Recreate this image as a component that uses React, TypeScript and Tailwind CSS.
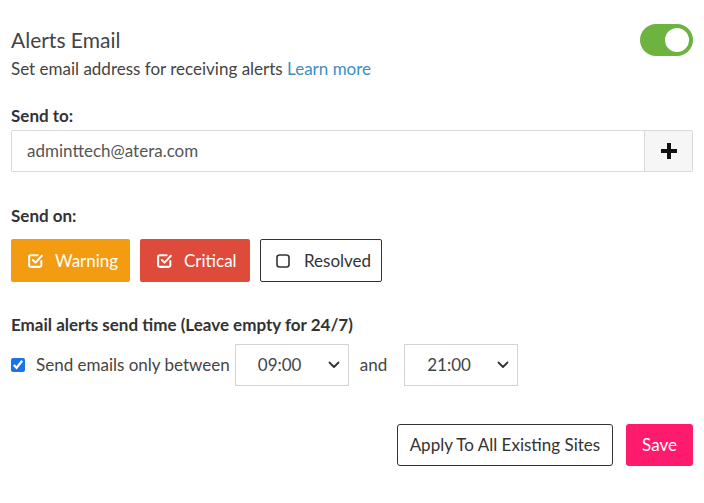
import React, { useState } from 'react';

const CheckSquare: React.FC = () => (
  <svg width="17" height="17" viewBox="0 0 16 16" fill="none" stroke="currentColor" strokeWidth="1.9" strokeLinecap="round" strokeLinejoin="round">
    <path d="M13.5 8.5V12.5a1.5 1.5 0 0 1-1.5 1.5H3.5A1.5 1.5 0 0 1 2 12.5v-8A1.5 1.5 0 0 1 3.5 3H10" />
    <path d="M5.5 7.5l2.5 2.5 6-6.5" />
  </svg>
);

const EmptySquare: React.FC = () => (
  <svg width="14" height="14" viewBox="0 0 14 14" fill="none" stroke="currentColor" strokeWidth="1.6">
    <rect x="1" y="1" width="12" height="12" rx="2.5" />
  </svg>
);

const Chevron: React.FC = () => (
  <svg width="12" height="8" viewBox="0 0 12 8" fill="none" stroke="#333" strokeWidth="1.8" strokeLinecap="round" strokeLinejoin="round">
    <path d="M1.5 1.5l4.5 4.5 4.5-4.5" />
  </svg>
);

const TimeSelect: React.FC<{ value: string }> = ({ value }) => (
  <div className="flex items-center justify-between w-[114px] h-[42px] border border-[#d4d4d4] bg-white pl-[22px] pr-[8px] text-[17px] text-[#444]">
    <span>{value}</span>
    <Chevron />
  </div>
);

const App: React.FC = () => {
  const [enabled] = useState(true);

  return (
    <div className="w-[704px] h-[503px] bg-white px-[11px] pt-[24px] text-[#333]" style={{ fontFamily: 'Lato, "Open Sans", sans-serif' }}>
      <div className="flex justify-between">
        <div>
          <h2 className="text-[21px] leading-[32px] text-[#444] font-normal">Alerts Email</h2>
          <p className="text-[17px] leading-[24px] mt-[1px] text-[#444]">
            Set email address for receiving alerts <a className="text-[#3b8fc2]">Learn more</a>
          </p>
        </div>
        <div className={`w-[53px] h-[32px] rounded-full ${enabled ? 'bg-[#6cb33f]' : 'bg-gray-300'} flex items-center justify-end pr-[2px]`}>
          <div className="w-[28px] h-[28px] rounded-full bg-white border-2 border-[#6cb33f]" />
        </div>
      </div>

      <div className="mt-[23px] text-[17px] font-bold leading-[24px] text-[#333]">Send to:</div>
      <div className="mt-[2px] flex h-[42px] border border-[#dadada] rounded-[2px]">
        <div className="flex-1 flex items-center pl-[15px] text-[17px] text-[#555]">adminttech@atera.com</div>
        <div className="w-[48px] flex items-center justify-center bg-[#f6f6f6] border-l border-[#dadada]">
          <svg width="16" height="16" viewBox="0 0 16 16" fill="#111">
            <rect x="6" y="0" width="4" height="16" />
            <rect x="0" y="6" width="16" height="4" />
          </svg>
        </div>
      </div>

      <div className="mt-[32px] text-[17px] font-bold leading-[24px]">Send on:</div>
      <div className="mt-[11px] flex gap-[10px]">
        <button className="flex items-center gap-[11px] h-[43px] w-[119px] pl-[16px] bg-[#f39c12] text-white text-[17px] rounded-[2px]">
          <CheckSquare /> Warning
        </button>
        <button className="flex items-center gap-[11px] h-[43px] w-[110px] pl-[16px] bg-[#df4b3a] text-white text-[17px] rounded-[2px]">
          <CheckSquare /> Critical
        </button>
        <button className="flex items-center gap-[14px] h-[43px] w-[122px] pl-[15px] bg-white border border-[#333] text-[#333] text-[17px] rounded-[2px]">
          <EmptySquare /> Resolved
        </button>
      </div>

      <div className="mt-[31px] text-[17px] font-bold leading-[24px]">Email alerts send time (Leave empty for 24/7)</div>
      <div className="mt-[7px] flex items-center">
        <input type="checkbox" defaultChecked className="w-[14px] h-[14px] accent-[#1a73e8]" />
        <span className="ml-[11px] text-[17px] text-[#444]">Send emails only between</span>
        <div className="ml-[5px]"><TimeSelect value="09:00" /></div>
        <span className="ml-[11px] text-[17px] text-[#444]">and</span>
        <div className="ml-[17px]"><TimeSelect value="21:00" /></div>
      </div>

      <div className="mt-[38px] flex justify-end gap-[13px]">
        <button className="h-[42px] px-[12px] border border-[#333] rounded-[3px] text-[17px] text-[#333] bg-white">Apply To All Existing Sites</button>
        <button className="h-[42px] px-[16px] rounded-[3px] text-[17px] text-white bg-[#fe1b6d]">Save</button>
      </div>
    </div>
  );
};

export default App;
